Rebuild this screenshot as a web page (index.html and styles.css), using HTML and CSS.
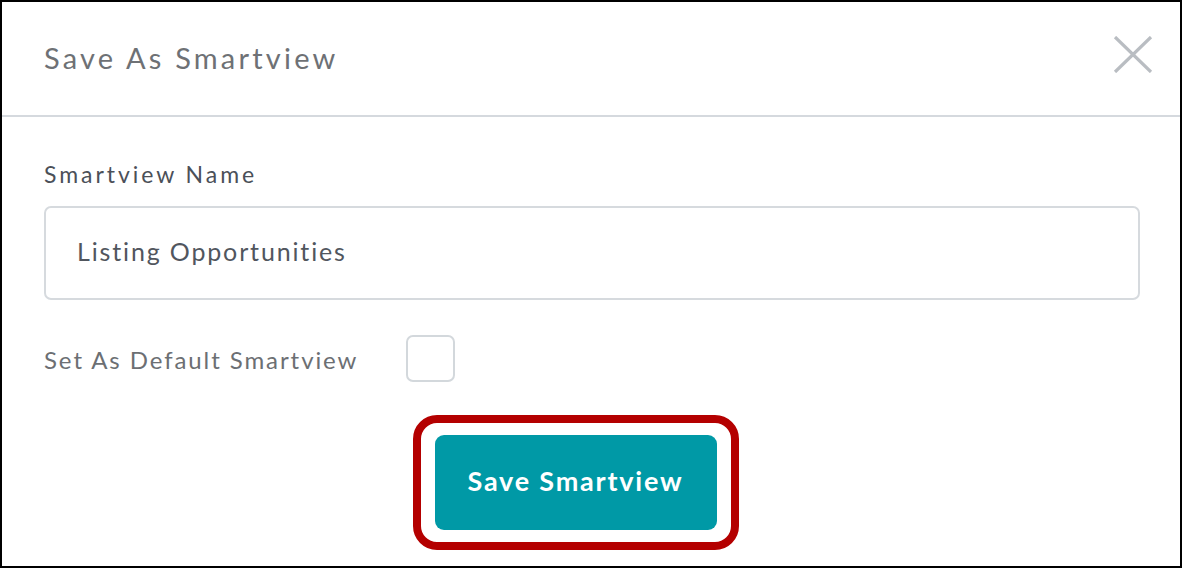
FILE: index.html
```html
<!DOCTYPE html>
<html>
<head>
<meta charset="utf-8">
<link rel="stylesheet" href="styles.css">
</head>
<body>
<div class="frame">
  <div class="header">
    <div class="title">Save As Smartview</div>
    <button class="close" aria-label="Close">
      <svg width="40" height="37" viewBox="0 0 40 37">
        <path d="M2 1 L38 36 M38 1 L2 36" stroke="#b9bdc2" stroke-width="3.2" fill="none"/>
      </svg>
    </button>
  </div>
  <div class="content">
    <div class="field-label">Smartview Name</div>
    <div class="input">Listing Opportunities</div>
    <div class="default-row">
      <span class="default-label">Set As Default Smartview</span>
      <span class="checkbox"></span>
    </div>
    <div class="actions">
      <div class="highlight">
        <button class="save">Save Smartview</button>
      </div>
    </div>
  </div>
</div>
</body>
</html>
```
FILE: styles.css
```css
* { box-sizing: border-box; }
html, body { margin: 0; padding: 0; background: #fff; }
body { font-family: Lato, "Noto Sans", sans-serif; }
.frame {
  width: 1182px;
  height: 568px;
  border: 2px solid #000;
  display: flex;
  flex-direction: column;
  overflow: hidden;
}
.header {
  height: 115px;
  flex: none;
  border-bottom: 2px solid #d5d9de;
  display: flex;
  align-items: center;
  justify-content: space-between;
  padding: 0 27px 8px 42px;
}
.title {
  font-size: 29px;
  color: #6e7175;
  letter-spacing: 3.2px;
  margin-top: 5px;
}
.close {
  border: 0;
  background: none;
  padding: 0;
  display: flex;
  margin-top: 0;
}
.content {
  padding: 43px 40px 0 42px;
  display: flex;
  flex-direction: column;
}
.field-label {
  font-size: 23px;
  color: #4b5058;
  line-height: 28px;
  letter-spacing: 2.95px;
}
.input {
  margin-top: 18px;
  height: 94px;
  border: 2px solid #d6dade;
  border-radius: 7px;
  padding: 0 0 4px 31px;
  display: flex;
  align-items: center;
  font-size: 25px;
  color: #51565e;
  letter-spacing: 1.85px;
}
.default-row {
  margin-top: 35px;
  display: flex;
  align-items: center;
  gap: 48px;
}
.default-label {
  font-size: 24px;
  color: #6c6f73;
  letter-spacing: 1.92px;
}
.checkbox {
  width: 49px;
  height: 47px;
  border: 2px solid #d3d8dc;
  border-radius: 7px;
  margin-bottom: 2px;
}
.actions {
  display: flex;
  justify-content: center;
  margin-top: 31px;
  padding-right: 33px;
}
.highlight {
  border: 8px solid #b40000;
  border-radius: 24px;
  padding: 12px 14px;
}
.save {
  width: 282px;
  height: 95px;
  border: 0;
  border-radius: 9px;
  background: #0099a6;
  color: #fff;
  font-family: Lato, "Noto Sans", sans-serif;
  font-weight: 700;
  font-size: 27px;
  letter-spacing: 1.8px;
  padding: 0 0 4px;
  cursor: pointer;
}
```
